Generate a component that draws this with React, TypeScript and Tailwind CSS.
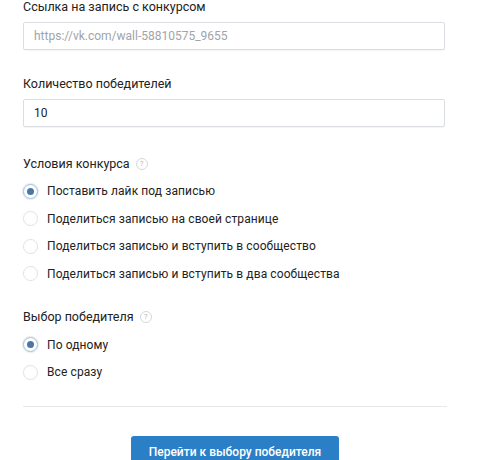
import { useState } from "react";

const conditions = [
  "Поставить лайк под записью",
  "Поделиться записью на своей странице",
  "Поделиться записью и вступить в сообщество",
  "Поделиться записью и вступить в два сообщества",
];

const modes = ["По одному", "Все сразу"];

function HelpIcon() {
  return (
    <span className="ml-[6px] inline-flex h-[12px] w-[12px] items-center justify-center rounded-full border border-[#d5d8dc] text-[8px] leading-none text-[#b5b9be]">
      ?
    </span>
  );
}

function Radio({
  label,
  checked,
  onSelect,
}: {
  label: string;
  checked: boolean;
  onSelect: () => void;
}) {
  return (
    <label
      onClick={onSelect}
      className="flex h-[27.5px] cursor-pointer items-center text-[12px] tracking-[0.1px] text-[#222]"
    >
      <span
        className={`mr-[9px] flex h-[15px] w-[15px] items-center justify-center rounded-full border ${
          checked
            ? "border-[#a7bfd6] shadow-[0_0_2px_rgba(81,129,184,0.5)]"
            : "border-[#e0e3e7] shadow-[0_0_1px_rgba(0,0,0,0.08)]"
        }`}
      >
        {checked && <span className="h-[7px] w-[7px] rounded-full bg-[#4a76a8]" />}
      </span>
      {label}
    </label>
  );
}

export default function App() {
  const [condition, setCondition] = useState(0);
  const [mode, setMode] = useState(0);

  return (
    <div
      className="h-[460px] w-[489px] overflow-hidden bg-white pl-[23px] text-[#222]"
      style={{ fontFamily: "Roboto, 'Noto Sans', sans-serif" }}
    >
      <div className="w-[424px]">
        <div className="text-[12.5px] leading-[14px]">Ссылка на запись с конкурсом</div>
        <input
          placeholder="https://vk.com/wall-58810575_9655"
          className="mt-[8px] h-[28px] w-[422px] rounded-[2px] border border-[#dadde1] px-[10px] text-[12px] text-[#222] shadow-[0_1px_1px_rgba(0,0,0,0.04)] outline-none placeholder:text-[#a0a4a8]"
        />

        <div className="mt-[27px] text-[12.5px] leading-[14px]">Количество победителей</div>
        <input
          defaultValue="10"
          className="mt-[8px] h-[28px] w-[422px] rounded-[2px] border border-[#dadde1] px-[10px] text-[12px] text-[#222] shadow-[0_1px_1px_rgba(0,0,0,0.04)] outline-none"
        />

        <div className="mt-[30px] flex items-center text-[12.5px] leading-[14px]">
          Условия конкурса
          <HelpIcon />
        </div>
        <div className="mt-[6.5px]">
          {conditions.map((c, i) => (
            <Radio key={c} label={c} checked={condition === i} onSelect={() => setCondition(i)} />
          ))}
        </div>

        <div className="mt-[22px] flex items-center text-[12.5px] leading-[14px]">
          Выбор победителя
          <HelpIcon />
        </div>
        <div className="mt-[7.5px]">
          {modes.map((m, i) => (
            <Radio key={m} label={m} checked={mode === i} onSelect={() => setMode(i)} />
          ))}
        </div>

        <div className="mt-[20px] h-px w-[424px] bg-[#e7e8ec]" />

        <div className="mt-[29px] flex justify-center">
          <button className="h-[32px] w-[208px] rounded-[3px] bg-[#2b7fc7] text-[12px] font-medium text-white">
            Перейти к выбору победителя
          </button>
        </div>
      </div>
    </div>
  );
}
